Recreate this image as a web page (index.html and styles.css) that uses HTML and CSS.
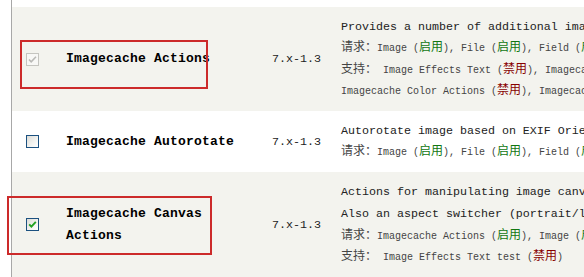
FILE: index.html
```html
<!DOCTYPE html>
<html>
<head>
<meta charset="utf-8">
<link rel="stylesheet" href="styles.css">
</head>
<body>
<div class="page">
  <table class="modules">
    <tr class="odd">
      <td class="check"><span class="cb disabled"><svg viewBox="0 0 13 13" width="13" height="13"><path d="M3 6.5 L5.2 8.8 L10 3.8" fill="none" stroke="#b9b9b6" stroke-width="1.6"/></svg></span></td>
      <td class="name">Imagecache Actions</td>
      <td class="version">7.x-1.3</td>
      <td class="desc">
        <div class="main">Provides a number of additional image effects.</div>
        <div class="req"><span class="cjk">请求：</span>Image (<span class="cjk on">启用</span>), File (<span class="cjk on">启用</span>), Field (<span class="cjk on">启用</span>), Field SQL storage (<span class="cjk on">启用</span>), System (<span class="cjk on">启用</span>)</div>
        <div class="req"><span class="cjk">支持：</span> Image Effects Text (<span class="cjk off">禁用</span>), Imagecache Canvas Actions (<span class="cjk on">启用</span>), Imagecache Custom Actions (<span class="cjk off">禁用</span>),<br>Imagecache Color Actions (<span class="cjk off">禁用</span>), Imagecache Autorotate (<span class="cjk off">禁用</span>)</div>
      </td>
    </tr>
    <tr class="even">
      <td class="check"><span class="cb"></span></td>
      <td class="name">Imagecache Autorotate</td>
      <td class="version">7.x-1.3</td>
      <td class="desc">
        <div class="main">Autorotate image based on EXIF Orientation.</div>
        <div class="req"><span class="cjk">请求：</span>Image (<span class="cjk on">启用</span>), File (<span class="cjk on">启用</span>), Field (<span class="cjk on">启用</span>), Field SQL storage (<span class="cjk on">启用</span>)</div>
      </td>
    </tr>
    <tr class="odd">
      <td class="check"><span class="cb"><svg viewBox="0 0 13 13" width="13" height="13"><path d="M3.2 6.3 L5.4 8.6 L9.8 3.9" fill="none" stroke="#22a122" stroke-width="1.9"/></svg></span></td>
      <td class="name">Imagecache Canvas Actions</td>
      <td class="version">7.x-1.3</td>
      <td class="desc">
        <div class="main">Actions for manipulating image canvases: define a background, overlay.<br>Also an aspect switcher (portrait/landscape) and rounded corners.</div>
        <div class="req"><span class="cjk">请求：</span>Imagecache Actions (<span class="cjk on">启用</span>), Image (<span class="cjk on">启用</span>), File (<span class="cjk on">启用</span>)</div>
        <div class="req"><span class="cjk">支持：</span> Image Effects Text test (<span class="cjk off">禁用</span>)</div>
      </td>
    </tr>
  </table>
</div>
<div class="mark mark-one"></div>
<div class="mark mark-two"></div>
</body>
</html>
```

FILE: styles.css
```css
html, body {
  margin: 0;
  padding: 0;
  background: #ffffff;
  overflow: hidden;
}
body {
  position: relative;
  width: 584px;
  height: 277px;
}
.page {
  margin-left: 11px;
  border-left: 1px solid #a8a8a8;
  padding-top: 7px;
  min-height: 400px;
  width: 1400px;
}
.modules {
  border-collapse: collapse;
  font-family: "Liberation Mono", monospace;
  color: #222;
}
.modules td {
  padding: 8.5px 0;
  vertical-align: middle;
  line-height: 22px;
}
tr.odd td { background: #f3f3ee; }
tr.even td { background: #ffffff; }
td.check {
  width: 40px;
  padding-left: 14px;
}
td.name {
  width: 180px;
  padding-right: 26px;
  font-weight: bold;
  font-size: 13px;
  letter-spacing: 0.2px;
  color: #000;
}
td.version {
  width: 49px;
  padding-right: 20px;
  font-size: 11.67px;
  color: #222;
  white-space: nowrap;
}
td.desc {
  width: 1000px;
}
.main {
  font-size: 11.67px;
  line-height: 22.5px;
  white-space: nowrap;
  color: #222;
}
.req {
  font-size: 10px;
  line-height: 21.5px;
  white-space: nowrap;
  color: #444;
}
.cjk {
  font-family: "Noto Sans CJK SC", sans-serif;
  font-size: 12px;
  line-height: 0;
}
.on { color: #117711; }
.off { color: #880000; }
.cb {
  display: block;
  width: 11px;
  height: 11px;
  border: 1px solid #1c5180;
  background: linear-gradient(135deg, #dcdcd7 0%, #f4f4f1 60%, #ffffff 100%);
  position: relative;
}
.cb svg {
  position: absolute;
  left: -1px;
  top: -1px;
}
.cb.disabled {
  border-color: #c5c5c0;
  background: #f8f8f6;
}
.mark {
  position: absolute;
  border: 2px solid #cc2a2a;
  box-sizing: border-box;
}
.mark-one {
  left: 20px;
  top: 40px;
  width: 188px;
  height: 49px;
}
.mark-two {
  left: 7px;
  top: 196px;
  width: 205px;
  height: 59px;
}
```
